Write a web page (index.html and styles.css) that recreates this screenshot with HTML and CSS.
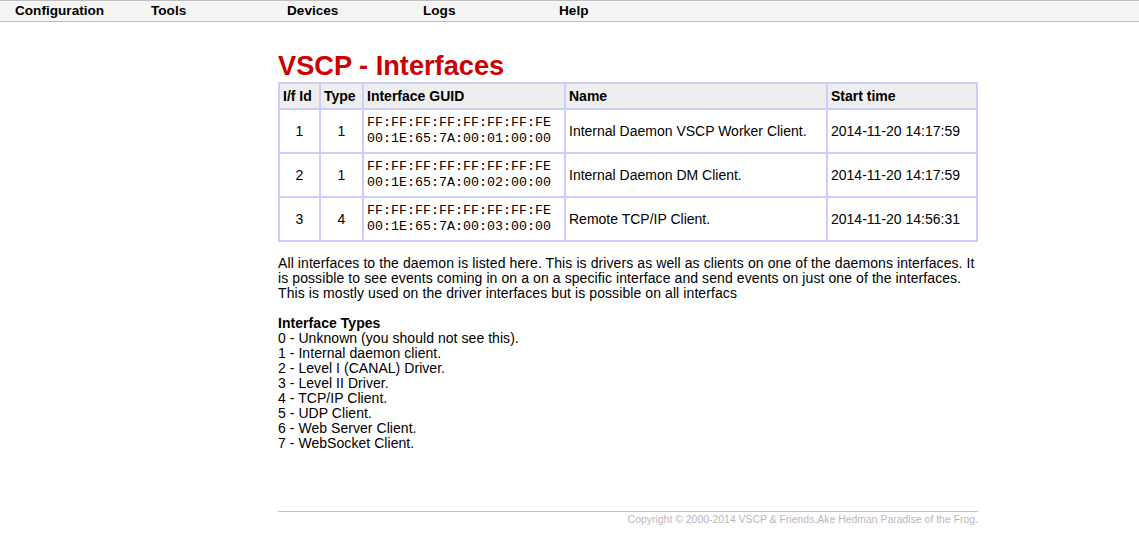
FILE: index.html
```html
<!DOCTYPE html>
<html>
<head>
<meta charset="utf-8">
<title>VSCP - Interfaces</title>
<link rel="stylesheet" href="styles.css">
</head>
<body>
<nav class="menubar">
  <ul class="menu">
    <li>Configuration</li>
    <li>Tools</li>
    <li>Devices</li>
    <li>Logs</li>
    <li>Help</li>
  </ul>
</nav>
<main class="content">
  <h1 class="title">VSCP - Interfaces</h1>
  <table class="iftable">
    <thead>
      <tr><th class="c-id">I/f Id</th><th class="c-type">Type</th><th class="c-guid">Interface GUID</th><th class="c-name">Name</th><th class="c-time">Start time</th></tr>
    </thead>
    <tbody>
      <tr><td class="num">1</td><td class="num">1</td><td class="guid">FF:FF:FF:FF:FF:FF:FF:FE<br>00:1E:65:7A:00:01:00:00</td><td>Internal Daemon VSCP Worker Client.</td><td>2014-11-20 14:17:59</td></tr>
      <tr><td class="num">2</td><td class="num">1</td><td class="guid">FF:FF:FF:FF:FF:FF:FF:FE<br>00:1E:65:7A:00:02:00:00</td><td>Internal Daemon DM Client.</td><td>2014-11-20 14:17:59</td></tr>
      <tr><td class="num">3</td><td class="num">4</td><td class="guid">FF:FF:FF:FF:FF:FF:FF:FE<br>00:1E:65:7A:00:03:00:00</td><td>Remote TCP/IP Client.</td><td>2014-11-20 14:56:31</td></tr>
    </tbody>
  </table>
  <p class="intro">All interfaces to the daemon is listed here. This is drivers as well as clients on one of the daemons interfaces. It is possible to see events coming in on a on a specific interface and send events on just one of the interfaces. This is mostly used on the driver interfaces but is possible on all interfacs</p>
  <div class="types">
    <div class="types-head">Interface Types</div>
    <div>0 - Unknown (you should not see this).</div>
    <div>1 - Internal daemon client.</div>
    <div>2 - Level I (CANAL) Driver.</div>
    <div>3 - Level II Driver.</div>
    <div>4 - TCP/IP Client.</div>
    <div>5 - UDP Client.</div>
    <div>6 - Web Server Client.</div>
    <div>7 - WebSocket Client.</div>
  </div>
  <footer class="footer">Copyright © 2000-2014 VSCP &amp; Friends,Ake Hedman Paradise of the Frog.</footer>
</main>
</body>
</html>
```
FILE: styles.css
```css
html, body {
  margin: 0;
  padding: 0;
  background: #fff;
  font-family: "Liberation Sans", Arial, sans-serif;
  color: #000;
}
.menubar {
  background: #f4f4f4;
  border-top: 1px solid #c0c0c0;
  border-bottom: 1px solid #c0c0c0;
  height: 20px;
}
.menu {
  list-style: none;
  margin: 0;
  padding: 0;
  display: flex;
}
.menu li {
  width: 121px;
  padding-left: 15px;
  font-size: 13.6px;
  font-weight: bold;
  line-height: 19px;
}
.content {
  width: 700px;
  margin-left: 278px;
  padding-top: 27px;
}
.title {
  margin: 0;
  color: #cc0000;
  font-size: 27.2px;
  line-height: 33px;
  font-weight: bold;
}
.iftable {
  border-collapse: collapse;
  table-layout: fixed;
  width: 700px;
  border: 2px solid #ccccff;
  font-size: 14px;
}
.iftable th, .iftable td {
  border: 2px solid #ccccff;
  padding: 0 3px;
  text-align: left;
}
.iftable th {
  background: #eeeeee;
  height: 24px;
  font-weight: bold;
}
.iftable td {
  height: 42px;
}
.iftable td.num {
  text-align: center;
}
.c-id { width: 33px; }
.c-type { width: 35px; }
.c-guid { width: 194px; }
.c-name { width: 254px; }
.iftable td.guid {
  font-family: "Liberation Mono", "Courier New", monospace;
  font-size: 13.33px;
  line-height: 16px;
}
.intro {
  margin: 14px 0 0 0;
  font-size: 14px;
  line-height: 15px;
  letter-spacing: 0.09px;
}
.types {
  margin-top: 15px;
  font-size: 14px;
  line-height: 15px;
  letter-spacing: 0.05px;
}
.types-head {
  font-weight: bold;
}
.footer {
  margin-top: 60px;
  border-top: 1px solid #c0c0c0;
  padding-top: 1px;
  text-align: right;
  color: #b8b8b8;
  font-size: 10.45px;
  line-height: 13px;
}
```
